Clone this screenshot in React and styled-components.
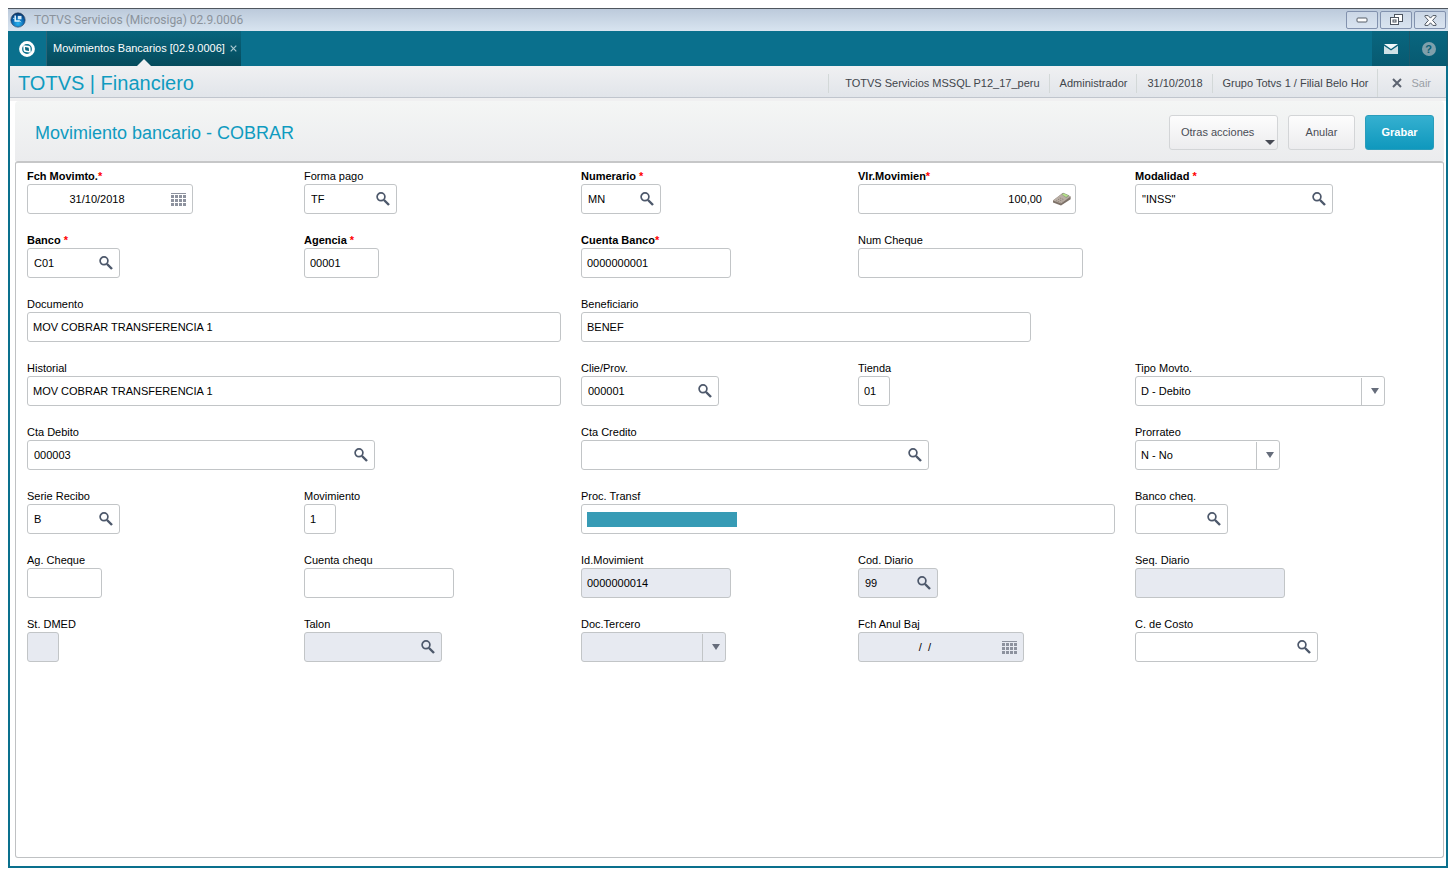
import styled, { createGlobalStyle, css } from "styled-components"
import { useState } from "react"

const FIELDS = [
    { name: "fecha", label: "Fch Movimto.", required: true, kind: "date", width: 166, value: "31/10/2018" },
    { name: "formaPago", label: "Forma pago", kind: "lookup", width: 93, value: "TF" },
    { name: "numerario", label: "Numerario ", required: true, kind: "lookup", width: 80, value: "MN" },
    { name: "valor", label: "Vlr.Movimien", required: true, kind: "amount", width: 218, value: "100,00" },
    { name: "modalidad", label: "Modalidad ", required: true, kind: "lookup", width: 198, value: "\"INSS\"" },

    { name: "banco", label: "Banco ", required: true, kind: "lookup", width: 93, value: "C01" },
    { name: "agencia", label: "Agencia ", required: true, width: 75, value: "00001" },
    { name: "cuenta", label: "Cuenta Banco", required: true, width: 150, value: "0000000001" },
    { name: "numCheque", label: "Num Cheque", width: 225, span: 2 },

    { name: "documento", label: "Documento", width: 534, span: 2, value: "MOV COBRAR TRANSFERENCIA 1" },
    { name: "beneficiario", label: "Beneficiario", width: 450, span: 3, value: "BENEF" },

    { name: "historial", label: "Historial", width: 534, span: 2, value: "MOV COBRAR TRANSFERENCIA 1" },
    { name: "cliente", label: "Clie/Prov.", kind: "lookup", width: 138, value: "000001" },
    { name: "tienda", label: "Tienda", width: 32, value: "01" },
    { name: "tipo", label: "Tipo Movto.", kind: "select", width: 250, value: "D - Debito", options: ["D - Debito", "C - Credito"] },

    { name: "ctaDebito", label: "Cta Debito", kind: "lookup", width: 348, span: 2, value: "000003" },
    { name: "ctaCredito", label: "Cta Credito", kind: "lookup", width: 348, span: 2 },
    { name: "prorrateo", label: "Prorrateo", kind: "select", width: 145, value: "N - No", options: ["N - No", "S - Si"] },

    { name: "serie", label: "Serie Recibo", kind: "lookup", width: 93, value: "B" },
    { name: "movimiento", label: "Movimiento", width: 32, value: "1" },
    { name: "proceso", label: "Proc. Transf", kind: "masked", width: 534, span: 2 },
    { name: "bancoCheque", label: "Banco cheq.", kind: "lookup", width: 93 },

    { name: "agCheque", label: "Ag. Cheque", width: 75 },
    { name: "cuentaCheque", label: "Cuenta chequ", width: 150 },
    { name: "idMovimiento", label: "Id.Movimient", width: 150, locked: true, value: "0000000014" },
    { name: "codDiario", label: "Cod. Diario", kind: "lookup", width: 80, locked: true, value: "99" },
    { name: "seqDiario", label: "Seq. Diario", width: 150, locked: true },

    { name: "dmed", label: "St. DMED", width: 32, locked: true },
    { name: "talon", label: "Talon", kind: "lookup", width: 138, locked: true },
    { name: "docTercero", label: "Doc.Tercero", kind: "select", width: 145, locked: true, value: "", options: [""] },
    { name: "fechaAnul", label: "Fch Anul Baj", kind: "date", width: 166, locked: true, value: "  /  /    " },
    { name: "costo", label: "C. de Costo", kind: "lookup", width: 183 },
]

const SearchIcon = () => (
    <svg width="14" height="14" viewBox="0 0 14 14" fill="none">
        <circle cx="5" cy="4.8" r="3.9" stroke="#4d586b" strokeWidth="1.7" />
        <path d="M8 8l5 5" stroke="#4d586b" strokeWidth="2.4" />
    </svg>
)

const CalendarIcon = () => (
    <svg width="15" height="13" viewBox="0 0 15 13" fill="#8d929e" shapeRendering="crispEdges">
        <rect x="0" y="0" width="15" height="1" />
        {[2, 6, 10].map(y => [0, 4, 8, 12].map(x => (
            <rect key={`${x}-${y}`} x={x} y={y} width="3" height="3" />
        )))}
    </svg>
)

const CalculatorIcon = () => (
    <svg width="18" height="14" viewBox="0 0 18 14">
        <path d="M0 8.5L9.5 1.2 17.6 4.6v2.6L8 13.4 0 10.4z" fill="#7d7168" />
        <path d="M0 8.5L9.5 1.2 17.6 4.6 8 11.4z" fill="#b9aea4" />
        <path d="M8.3 2.2L10.3.8l6.2 2.8-3.3 2.3z" fill="#8f9b80" />
        <path d="M9.2 2.4l1.4-1 4.6 2.1-2.2 1.5z" fill="#b6e388" />
        <path d="M3.2 8.6l4.4 1.8M5 7.2l4.4 1.9M6.8 5.9l4.2 1.9" stroke="#857970" strokeWidth=".8" strokeDasharray="1.3 .8" />
    </svg>
)

const OrbIcon = () => (
    <svg width="16" height="16" viewBox="0 0 16 16">
        <defs>
            <radialGradient id="orb" cx=".5" cy=".75" r=".75">
                <stop offset="0" stopColor="#27b4f0" />
                <stop offset=".6" stopColor="#0b62ac" />
                <stop offset="1" stopColor="#0a2f60" />
            </radialGradient>
        </defs>
        <circle cx="8" cy="8" r="7.2" fill="url(#orb)" stroke="#33455c" strokeWidth=".6" />
        <path d="M5.2 3.5v6.2M5.2 9h4.6" stroke="#e5f5fd" strokeWidth="1.5" fill="none" />
        <path d="M7.8 3.9h3.7v3.4H7.8z" fill="#d5ecf8" />
        <path d="M3 6.4h2M9.8 9l1.4 1.2" stroke="#9ed4ef" />
    </svg>
)

const TotvsIcon = () => (
    <svg width="16" height="16" viewBox="0 0 16 16" fill="none">
        <circle cx="8" cy="8" r="6.4" stroke="#fff" strokeWidth="3" />
        <path d="M4.2 4.2l5.2.6c1.4.2 2 .9 2.1 2.2l.3 4.8-5.2-.7c-1.400-.2-2-.8-2.100-2.100z" fill="#fff" />
        <path d="M6 6l2.800.4c.7.1 1 .4 1 1.100l.2 2.500-2.800-.4c-.7-.1-1-.5-1-1.100z" fill="#07647c" />
    </svg>
)

const MailIcon = () => (
    <svg width="14" height="10" viewBox="0 0 14 10">
        <path d="M0 0h14L7 5z" fill="#f2f8fa" />
        <path d="M0 1.7L7 6.6l7-4.9V10H0z" fill="#cfe1e6" />
    </svg>
)

const MinimizeIcon = () => (
    <svg width="12" height="6" viewBox="0 0 12 6">
        <rect x="1" y="1" width="10" height="4" rx="1" fill="#fff" stroke="#555d66" />
    </svg>
)

const RestoreIcon = () => (
    <svg width="13" height="12" viewBox="0 0 13 12" fill="#fff" stroke="#4d5560">
        <rect x="4.5" y=".5" width="8" height="7" />
        <rect x=".5" y="3.5" width="8" height="7" />
        <rect x="3" y="6" width="3" height="2" />
    </svg>
)

const CloseIcon = () => (
    <svg width="13" height="11" viewBox="0 0 13 11">
        <path d="M1 .6h3.2l2.3 2.5L8.8.6H12v1L8.6 5.4 12 9.2v1.2H8.8L6.5 7.8l-2.3 2.6H1V9.2l3.4-3.8L1 1.6z" fill="#fff" stroke="#4d5560" />
    </svg>
)

const ExitIcon = () => (
    <svg width="10" height="10" viewBox="0 0 10 10">
        <path d="M1 1l8 8M9 1L1 9" stroke="#5c6370" strokeWidth="2" />
    </svg>
)

const Field = ({ field, value, onChange }) => {
    const { name, label, required, kind, width, span, locked, options } = field
    const common = { id: name, name, value, onChange }
    return (
        <FieldCell $span={span}>
            <Label htmlFor={name} $required={required}>
                {label}{required && <Star>*</Star>}
            </Label>
            <FieldBox $width={width} $locked={locked}>
                {kind === "select" ? (
                    <>
                        <Select {...common} disabled={locked}>
                            {options.map(option => <option key={option}>{option}</option>)}
                        </Select>
                        <SelectArrow><Triangle /></SelectArrow>
                    </>
                ) : (
                    <>
                        {kind === "masked" && <MaskedValue />}
                        <TextInput {...common} type="text" readOnly={locked} $kind={kind} />
                        {kind === "lookup" && <IconButton type="button" aria-label={`Buscar ${label}`}><SearchIcon /></IconButton>}
                        {kind === "date" && <IconButton type="button" aria-label={`Calendario ${label}`}><CalendarIcon /></IconButton>}
                        {kind === "amount" && <IconButton type="button" $wide aria-label="Calculadora"><CalculatorIcon /></IconButton>}
                    </>
                )}
            </FieldBox>
        </FieldCell>
    )
}

const App = () => {
    const [values, setValues] = useState(() => Object.fromEntries(FIELDS.map(f => [f.name, f.value || ""])))

    const handleChange = e => {
        const { name, value } = e.target
        setValues(pre => ({ ...pre, [name]: value }))
    }

    return (
        <>
            <GlobalStyle />
            <Window>
                <TitleBar>
                    <OrbIcon />
                    <WindowTitle>TOTVS Servicios (Microsiga) 02.9.0006</WindowTitle>
                    <WindowButton aria-label="Minimizar"><MinimizeIcon /></WindowButton>
                    <WindowButton aria-label="Restaurar"><RestoreIcon /></WindowButton>
                    <WindowButton aria-label="Cerrar"><CloseIcon /></WindowButton>
                </TitleBar>
                <TabBar>
                    <BarButton aria-label="Inicio"><TotvsIcon /></BarButton>
                    <Tab>
                        Movimientos Bancarios [02.9.0006]
                        <TabClose aria-label="Cerrar pestaña">
                            <svg width="7" height="7" viewBox="0 0 7 7">
                                <path d="M.7.7l5.6 5.6M6.3.7L.7 6.3" stroke="#a9c8d0" strokeWidth="1.2" />
                            </svg>
                        </TabClose>
                    </Tab>
                    <Spacer />
                    <BarButton $dark aria-label="Mensajes"><MailIcon /></BarButton>
                    <BarButton $dark aria-label="Ayuda"><HelpMark>?</HelpMark></BarButton>
                </TabBar>
                <Body>
                    <ModuleBar>
                        <ModuleTitle>TOTVS | Financiero</ModuleTitle>
                        <Spacer />
                        <InfoItem $wide>TOTVS Servicios MSSQL P12_17_peru</InfoItem>
                        <InfoItem>Administrador</InfoItem>
                        <InfoItem>31/10/2018</InfoItem>
                        <InfoItem>Grupo Totvs 1 / Filial Belo Hor</InfoItem>
                        <ExitButton><ExitIcon />Sair</ExitButton>
                    </ModuleBar>
                    <Content>
                        <ActionBar>
                            <PageTitle>Movimiento bancario - COBRAR</PageTitle>
                            <Spacer />
                            <MenuButton>Otras acciones<Triangle $menu /></MenuButton>
                            <Button>Anular</Button>
                            <PrimaryButton>Grabar</PrimaryButton>
                        </ActionBar>
                        <Form onSubmit={e => e.preventDefault()}>
                            {FIELDS.map(field => (
                                <Field key={field.name} field={field} value={values[field.name]} onChange={handleChange} />
                            ))}
                        </Form>
                    </Content>
                </Body>
            </Window>
        </>
    )
}
export default App

const GlobalStyle = createGlobalStyle`
    * {
        box-sizing: border-box;
    }
    body {
        margin: 0;
        padding: 8px;
        background: #fff;
        font: 11px/15px "Liberation Sans", Arial, sans-serif;
        color: #000;
    }
    button, input, select {
        font: inherit;
        color: inherit;
        margin: 0;
    }
    svg {
        display: block;
        flex: none;
    }
    `;

const Window = styled.div`
    display: flex;
    flex-direction: column;
    min-height: calc(100vh - 16px);
    `;

const TitleBar = styled.header`
    display: flex;
    align-items: center;
    gap: 2px;
    height: 23px;
    padding: 0 2px;
    border-top: 1px solid #4f565e;
    background: linear-gradient(#bccadb, #d8e4f0);
    `;

const WindowTitle = styled.div`
    flex: 1;
    padding-left: 6px;
    font: 12px/16px Roboto, "Open Sans", sans-serif;
    color: #8b939c;
    `;

const WindowButton = styled.button`
    display: flex;
    align-items: center;
    justify-content: center;
    width: 32px;
    height: 18px;
    padding: 0;
    border: 1px solid #8292ae;
    border-radius: 2px;
    background: linear-gradient(#cbd7e6, #d9e4f0);
    `;

const TabBar = styled.nav`
    display: flex;
    height: 35px;
    background: #0a708d;
    `;

const Spacer = styled.div`
    flex: 1;
    `;

const BarButton = styled.button`
    display: flex;
    align-items: center;
    justify-content: center;
    width: 38px;
    padding: 0;
    border: 0;
    background: transparent;
    ${p => p.$dark && css`
        border-right: 1px solid #1a586b;
        background: linear-gradient(#09667f, #075a71);
    `}
    `;

const Tab = styled.div`
    position: relative;
    display: flex;
    align-items: center;
    gap: 5px;
    padding: 0 4px 0 6px;
    border-left: 1px solid #2c6577;
    background: linear-gradient(#08647d, #064b5c);
    color: #fff;
    &::after{
        content: "";
        position: absolute;
        bottom: 0;
        left: 50%;
        margin-left: -7px;
        border: 7px solid transparent;
        border-top-width: 0;
        border-bottom-color: #f0f0f2;
    }
    `;

const TabClose = styled.button`
    padding: 0;
    border: 0;
    background: transparent;
    `;

const HelpMark = styled.span`
    width: 14px;
    height: 14px;
    border-radius: 50%;
    background: #7fa0ab;
    color: #075f77;
    font-weight: bold;
    line-height: 14px;
    text-align: center;
    `;

const Body = styled.div`
    flex: 1;
    display: flex;
    flex-direction: column;
    border: 2px solid #0a708d;
    border-top: 0;
    `;

const ModuleBar = styled.div`
    display: flex;
    align-items: center;
    height: 32px;
    padding: 3px 0 0 8px;
    border-bottom: 1px solid #c0c5cd;
    background: linear-gradient(#f0f0f2, #e1e5ea);
    `;

const ModuleTitle = styled.h1`
    margin: 0;
    font-size: 20px;
    line-height: 24px;
    font-weight: normal;
    color: #0f9bc0;
    `;

const InfoItem = styled.span`
    padding: 2px 9px 2px 10px;
    padding-left: ${p => p.$wide ? 16 : 10}px;
    border-left: 1px solid #d3d8d8;
    color: #41454b;
    `;

const ExitButton = styled.button`
    display: flex;
    align-items: center;
    gap: 9px;
    align-self: stretch;
    padding: 0 15px 0 14px;
    border: 0;
    border-left: 1px solid #d3d8d8;
    background: transparent;
    color: #9a9fa6;
    `;

const Content = styled.main`
    flex: 1;
    display: flex;
    flex-direction: column;
    padding: 0 2px 8px 5px;
    border-top: 3px solid #f0f0f1;
    `;

const ActionBar = styled.div`
    display: flex;
    align-items: center;
    gap: 10px;
    height: 60px;
    padding: 3px 10px 0 20px;
    border-radius: 4px 4px 0 0;
    background: linear-gradient(#f4f6f5, #ebecee);
    `;

const PageTitle = styled.h2`
    margin: 0;
    font-size: 18px;
    line-height: 24px;
    font-weight: normal;
    color: #0f9bc0;
    `;

const Button = styled.button`
    width: 67px;
    height: 35px;
    padding: 0;
    border: 1px solid #d3d5d7;
    border-radius: 3px;
    background: linear-gradient(#fdfdfd, #ececee);
    color: #4a4d55;
    `;

const MenuButton = styled(Button)`
    display: flex;
    align-items: center;
    justify-content: space-between;
    width: 109px;
    padding: 0 2px 0 11px;
    `;

const PrimaryButton = styled(Button)`
    width: 69px;
    border-color: #2a9dbb;
    background: linear-gradient(#35b0d0, #0f98bd);
    color: #fff;
    font-weight: bold;
    `;

const Triangle = styled.span`
    border: 4px solid transparent;
    border-top: 6px solid #666d7b;
    border-bottom: 0;
    ${p => p.$menu && css`
        align-self: flex-end;
        margin-bottom: 4px;
        border-width: 5px 5px 0;
        border-top-color: #474a54;
    `}
    `;

const Form = styled.form`
    flex: 1;
    display: grid;
    grid-template-columns: repeat(5, 1fr);
    align-content: start;
    row-gap: 19px;
    padding: 6px 31px 19px 11px;
    border: 1px solid #bfc1c3;
    border-top: 2px solid #c6c7c8;
    border-radius: 3px;
    background: #fff;
    `;

const FieldCell = styled.div`
    grid-column: span ${p => p.$span || 1};
    min-width: 0;
    `;

const Label = styled.label`
    display: block;
    font-weight: ${p => p.$required ? "bold" : "normal"};
    white-space: pre;
    `;

const Star = styled.span`
    color: #f00;
    `;

const FieldBox = styled.div`
    position: relative;
    display: flex;
    align-items: center;
    width: ${p => p.$width}px;
    max-width: 100%;
    height: 30px;
    border: 1px solid #c2c5c7;
    border-radius: 3px;
    background: ${p => p.$locked ? "#e7eaf1" : "#fff"};
    `;

const TextInput = styled.input`
    flex: 1;
    min-width: 0;
    height: 100%;
    padding: 0 0 0 ${p => p.$kind === "lookup" ? 6 : 5}px;
    border: 0;
    outline: 0;
    background: transparent;
    ${p => p.$kind === "date" && css`
        padding: 0 5px 0 0;
        text-align: center;
    `}
    ${p => p.$kind === "amount" && css`
        text-align: right;
    `}
    `;

const IconButton = styled.button`
    display: flex;
    padding: ${p => p.$wide ? "0 4px 0 11px" : "0 6px 0 0"};
    border: 0;
    background: transparent;
    `;

const MaskedValue = styled.span`
    width: 150px;
    height: 15px;
    margin-left: 5px;
    background: #379bb5;
    `;

const Select = styled.select`
    width: 100%;
    height: 100%;
    padding: 0 24px 0 5px;
    border: 0;
    outline: 0;
    appearance: none;
    background: transparent;
    `;

const SelectArrow = styled.span`
    position: absolute;
    top: 1px;
    right: 0;
    bottom: 0;
    display: flex;
    align-items: center;
    justify-content: center;
    width: 23px;
    padding: 0 0 2px 4px;
    border-left: 1px solid #c2c5c7;
    pointer-events: none;
    `;
